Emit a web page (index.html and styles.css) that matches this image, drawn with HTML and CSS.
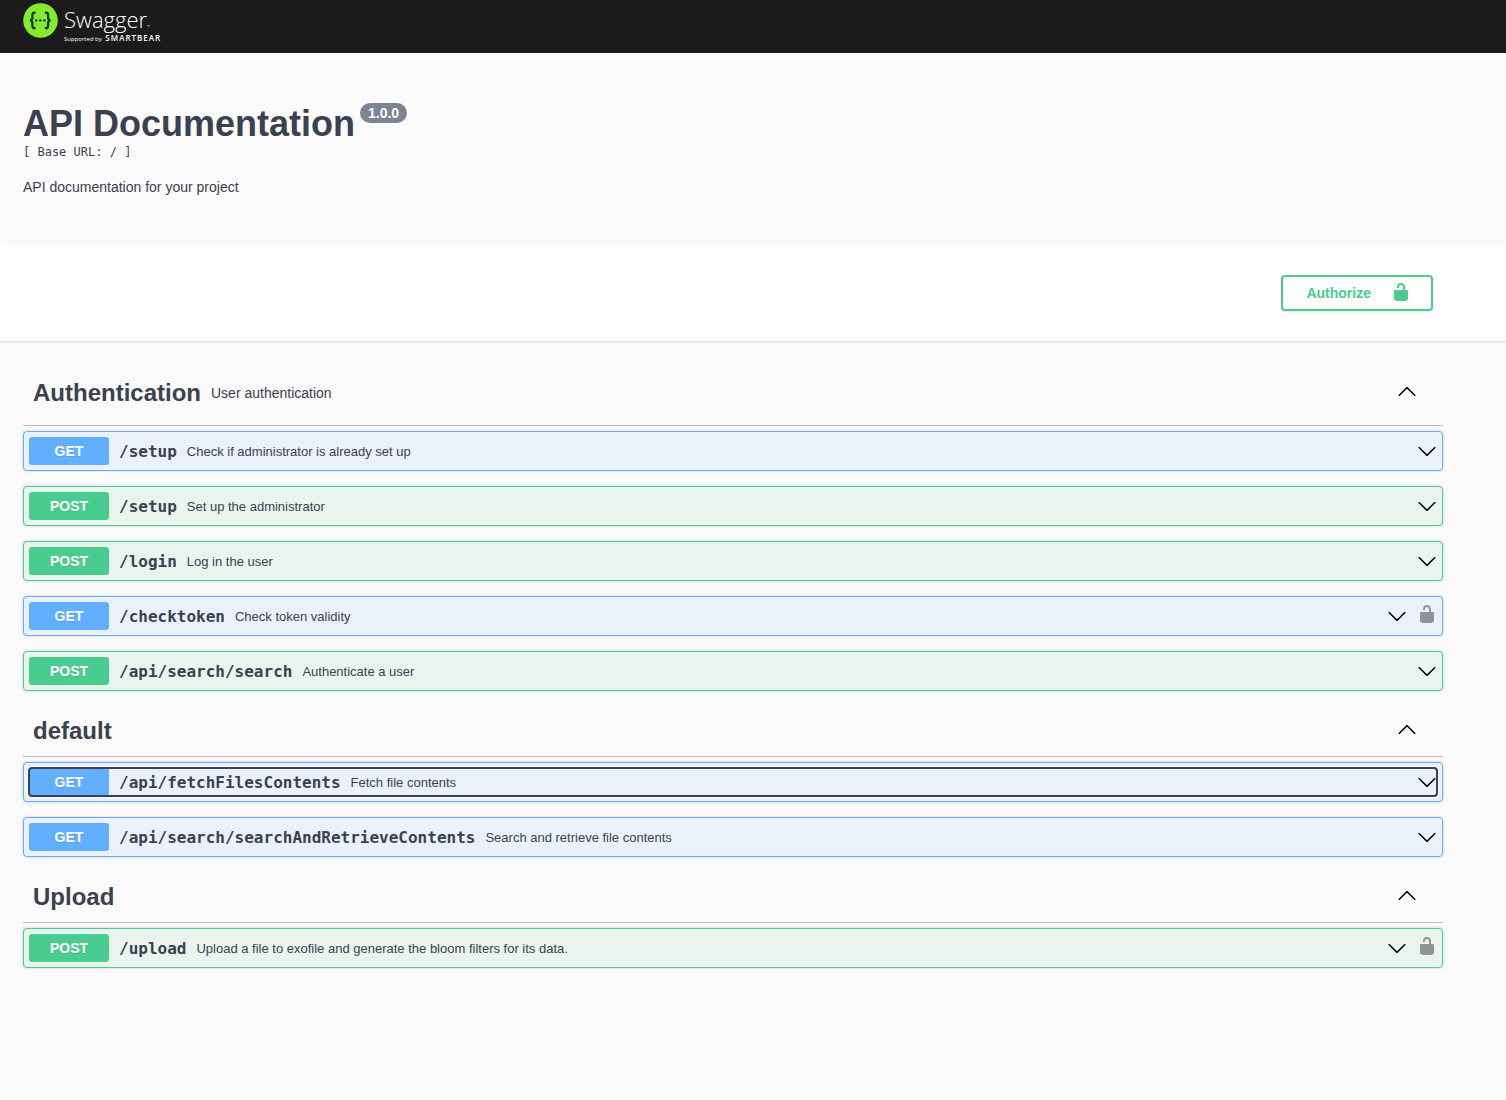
FILE: index.html
```html
<!DOCTYPE html>
<html lang="en">
<head>
<meta charset="utf-8">
<title>API Documentation</title>
<meta name="viewport" content="width=device-width, initial-scale=1">
<link rel="stylesheet" href="styles.css">
</head>
<body>
<svg class="symbols" aria-hidden="true">
  <symbol id="arrow-up" viewBox="0 0 20 20"><path d="M17.418 14.908c.272.268.709.268.979 0s.271-.701 0-.969l-7.908-7.836c-.27-.268-.707-.268-.979 0l-7.908 7.836c-.27.268-.27.701 0 .969.271.268.709.268.979 0L10 7.767l7.418 7.141z"/></symbol>
  <symbol id="arrow-down" viewBox="0 0 20 20"><path d="M17.418 6.109c.272-.268.709-.268.979 0s.271.701 0 .969l-7.908 7.83c-.27.268-.707.268-.979 0l-7.908-7.83c-.27-.268-.27-.701 0-.969.271-.268.709-.268.979 0L10 13.25l7.418-7.141z"/></symbol>
  <symbol id="unlocked" viewBox="0 0 20 20"><path d="M15.8 8H14V5.6C14 2.703 12.665 1 10 1 7.334 1 6 2.703 6 5.6V6h2v-.801C8 3.754 8.797 3 10 3c1.203 0 2 .754 2 2.199V8H4c-.553 0-1 .646-1 1.199V17c0 .549.428 1.139.951 1.307l1.197.387C5.672 18.861 6.55 19 7.1 19h5.8c.549 0 1.428-.139 1.951-.307l1.196-.387c.524-.167.953-.757.953-1.306V9.199C17 8.646 16.352 8 15.8 8z"/></symbol>
</svg>

<header class="topbar">
  <a class="logo" href="#" aria-label="Swagger, supported by SmartBear">
    <svg class="logo-mark" width="35" height="35" viewBox="0 0 35 35" aria-hidden="true">
      <circle cx="17.5" cy="17.5" r="17.3" fill="#85ea2d"/>
      <g fill="none" stroke="#173647" stroke-width="2.3">
        <path d="M12.6 9.6h-.9c-1.6 0-2.3.8-2.3 2.3v2.7c0 1.7-.8 2.7-2.4 2.8 1.6.1 2.4 1.1 2.4 2.8v2.7c0 1.5.7 2.3 2.3 2.3h.9"/>
        <path d="M21.900 9.600h.9c1.600 0 2.300.8 2.300 2.300v2.700c0 1.700.8 2.700 2.400 2.800-1.600.1-2.400 1.100-2.400 2.800v2.700c0 1.500-.7 2.300-2.300 2.300h-.9"/>
      </g>
      <g fill="#173647"><circle cx="13.200" cy="17.400" r="1.200"/><circle cx="17.300" cy="17.400" r="1.200"/><circle cx="21.400" cy="17.400" r="1.200"/></g>
    </svg>
    <span class="logo-text">
      <span class="logo-name">Swagger<span class="logo-tm">™</span></span>
      <span class="logo-support">Supported by <b>SMARTBEAR</b></span>
    </span>
  </a>
</header>

<main>
  <section class="wrapper info">
    <h1 class="title">API Documentation <span class="version">1.0.0</span></h1>
    <pre class="base-url">[ Base URL: / ]</pre>
    <p class="description">API documentation for your project</p>
  </section>

  <section class="schemes">
    <div class="wrapper schemes-inner">
      <button class="authorize" type="button"><span>Authorize</span><svg class="icon"><use href="#unlocked"/></svg></button>
    </div>
  </section>

  <div class="wrapper operations">
    <section class="tag">
      <div class="tag-header described">
        <h2>Authentication</h2><p>User authentication</p>
        <button class="expand" type="button" aria-label="Collapse Authentication"><svg class="icon"><use href="#arrow-up"/></svg></button>
      </div>
      <div class="op get"><button class="summary" type="button"><span class="method">GET</span><span class="path">/setup</span><span class="about">Check if administrator is already set up</span><svg class="icon"><use href="#arrow-down"/></svg></button></div>
      <div class="op post"><button class="summary" type="button"><span class="method">POST</span><span class="path">/setup</span><span class="about">Set up the administrator</span><svg class="icon"><use href="#arrow-down"/></svg></button></div>
      <div class="op post"><button class="summary" type="button"><span class="method">POST</span><span class="path">/login</span><span class="about">Log in the user</span><svg class="icon"><use href="#arrow-down"/></svg></button></div>
      <div class="op get"><button class="summary" type="button"><span class="method">GET</span><span class="path">/checktoken</span><span class="about">Check token validity</span><svg class="icon"><use href="#arrow-down"/></svg></button><button class="lock" type="button" aria-label="Authorize checktoken"><svg class="icon"><use href="#unlocked"/></svg></button></div>
      <div class="op post"><button class="summary" type="button"><span class="method">POST</span><span class="path">/api/search/search</span><span class="about">Authenticate a user</span><svg class="icon"><use href="#arrow-down"/></svg></button></div>
    </section>

    <section class="tag">
      <div class="tag-header">
        <h2>default</h2>
        <button class="expand" type="button" aria-label="Collapse default"><svg class="icon"><use href="#arrow-up"/></svg></button>
      </div>
      <div class="op get"><button class="summary focused" type="button"><span class="method">GET</span><span class="path">/api/fetchFilesContents</span><span class="about">Fetch file contents</span><svg class="icon"><use href="#arrow-down"/></svg></button></div>
      <div class="op get"><button class="summary" type="button"><span class="method">GET</span><span class="path">/api/search/searchAndRetrieveContents</span><span class="about">Search and retrieve file contents</span><svg class="icon"><use href="#arrow-down"/></svg></button></div>
    </section>

    <section class="tag">
      <div class="tag-header">
        <h2>Upload</h2>
        <button class="expand" type="button" aria-label="Collapse Upload"><svg class="icon"><use href="#arrow-up"/></svg></button>
      </div>
      <div class="op post"><button class="summary" type="button"><span class="method">POST</span><span class="path">/upload</span><span class="about">Upload a file to exofile and generate the bloom filters for its data.</span><svg class="icon"><use href="#arrow-down"/></svg></button><button class="lock" type="button" aria-label="Authorize upload"><svg class="icon"><use href="#unlocked"/></svg></button></div>
    </section>
  </div>
</main>
</body>
</html>
```

FILE: styles.css
```css
* { box-sizing: border-box; }

body {
  margin: 0;
  background: #fafafa;
  color: #3b4151;
  font-family: "Liberation Sans", Arial, sans-serif;
  font-size: 14px;
}

h1, h2, p, pre { margin: 0; }

button {
  padding: 0;
  border: 0;
  background: none;
  color: inherit;
  font: inherit;
  text-align: left;
  cursor: pointer;
}

.symbols { display: none; }

.icon {
  display: block;
  flex: none;
  width: 20px;
  height: 20px;
}

.wrapper {
  max-width: 1483px;
  padding: 0 40px 0 23px;
}

/* Top bar */
.topbar {
  display: flex;
  align-items: flex-start;
  height: 53px;
  padding: 3px 23px;
  background: #1b1b1b;
}

.logo {
  display: flex;
  gap: 6px;
  color: #fff;
  text-decoration: none;
  font-family: "Open Sans", sans-serif;
}

.logo-text {
  display: flex;
  flex-direction: column;
}

.logo-name {
  height: 31px;
  font-size: 22px;
  font-weight: 300;
  line-height: 32px;
}

.logo-tm {
  font-size: 4px;
  line-height: 4px;
}

.logo-support {
  font-size: 6px;
  line-height: 8px;
  white-space: nowrap;
}

.logo-support b {
  margin-left: 2px;
  font-size: 8px;
  font-weight: 600;
  letter-spacing: 1px;
}

/* Title block */
.info {
  padding-top: 50px;
  padding-bottom: 49px;
}

.title {
  display: flex;
  align-items: flex-start;
  gap: 5px;
  font-size: 36px;
  line-height: 41px;
}

.version {
  padding: 2px 8px;
  border-radius: 10px;
  background: #7d8492;
  color: #fff;
  font-size: 14px;
  line-height: 16px;
}

.base-url {
  font: 12px/16px "DejaVu Sans Mono", monospace;
}

.description {
  margin-top: 18px;
  line-height: 18px;
}

/* Authorize strip */
.schemes {
  padding: 30px 0;
  background: #fff;
  box-shadow: 0 1px 2px rgba(0, 0, 0, .15);
}

.schemes-inner {
  display: flex;
  justify-content: flex-end;
}

.authorize {
  display: flex;
  gap: 20px;
  margin-right: 10px;
  padding: 5px 20px 5px 23px;
  border: 2px solid #49cc90;
  border-radius: 4px;
  box-shadow: 0 1px 2px rgba(0, 0, 0, .1);
  color: #49cc90;
  font-weight: 700;
  line-height: 22px;
}

.authorize .icon { fill: #49cc90; }

/* Operations */
.operations {
  padding-top: 20px;
  padding-bottom: 40px;
}

.tag-header {
  display: flex;
  align-items: center;
  gap: 10px;
  margin-bottom: 5px;
  padding: 10px 26px 10px 10px;
  border-bottom: 1px solid #bbbcc2;
}

.tag-header.described {
  padding-top: 17px;
  padding-bottom: 17px;
}

.tag-header h2 {
  font-size: 24px;
  line-height: 30px;
}

.expand {
  margin-left: auto;
  padding-bottom: 4px;
}

.op {
  display: flex;
  gap: 10px;
  margin-bottom: 15px;
  padding: 5px;
  border: 1px solid;
  border-radius: 4px;
  box-shadow: 0 0 3px rgba(0, 0, 0, .19);
}

.get { border-color: #61affe; background: #ebf1fb; }
.post { border-color: #49cc90; background: #e9f4ee; }

.summary {
  display: flex;
  flex: 1;
  align-items: center;
  gap: 10px;
  min-width: 0;
  border-radius: 3px;
}

.summary.focused {
  outline: 2px solid #3b4151;
  outline-offset: -1px;
  box-shadow: 0 0 0 2px #fff;
}

.method {
  flex: none;
  width: 80px;
  border-radius: 3px;
  color: #fff;
  font-weight: 700;
  line-height: 28px;
  text-align: center;
  text-shadow: 0 1px 0 rgba(0, 0, 0, .1);
}

.get .method { background: #61affe; }
.post .method { background: #49cc90; }

.path {
  padding-top: 2px;
  font: 700 16px/20px "DejaVu Sans Mono", monospace;
}

.about {
  flex: 1;
  font-size: 13px;
}

.lock {
  display: flex;
  padding: 2px 0 6px;
}

.lock .icon { fill: #909296; }
```
